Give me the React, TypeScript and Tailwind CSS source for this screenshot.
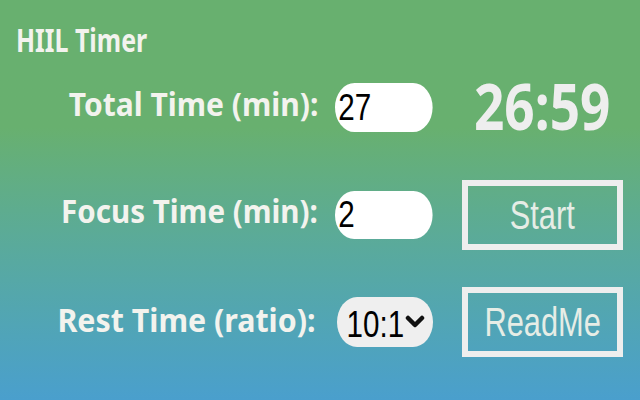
import { useState } from 'react';

const narrow = "font-['Liberation_Sans',Arial,sans-serif]";

function Label({ children, squeeze, end }: { children: string; squeeze: string; end?: string }) {
    return (
        <div className={`w-[318px] text-right -mt-[6px] ${end ?? ''}`}>
            <span className={`inline-block origin-right ${squeeze} text-[33px] font-bold leading-none whitespace-nowrap`}>{children}</span>
        </div>
    );
}

function OutlineButton({ children }: { children: string }) {
    return (
        <button className="ml-[29px] w-[161px] h-[70px] border-[6px] border-[#eeeeee] flex items-center justify-center overflow-hidden">
            <span className={`inline-block scale-x-[0.77] text-[40px] leading-none text-[#e6ede6] ${narrow}`}>{children}</span>
        </button>
    );
}

export default function App() {
    const [total, setTotal] = useState('27');
    const [focus, setFocus] = useState('2');
    const [ratio, setRatio] = useState('10:1');

    return (
        <div className="w-[640px] h-[400px] overflow-hidden bg-linear-to-b from-[#68b06f] from-[32%] to-[#4a9fcd] text-[#f3f3ee] font-['Noto_Sans',sans-serif]">
            {/* Title */}
            <div className="h-[54px] pl-[16px] pt-[24px]">
                <span className="inline-block origin-left scale-x-[0.78] text-[32px] font-bold leading-[32px] whitespace-nowrap">HIIL Timer</span>
            </div>

            {/* Total time */}
            <div className="flex items-center h-[107px]">
                <Label squeeze="scale-x-[0.91]">Total Time (min):</Label>
                <div className="ml-[17px] w-[98px] h-[49px]">
                    <input
                        value={total}
                        onChange={(e) => setTotal(e.target.value)}
                        className={`origin-left scale-x-[0.8] w-[122px] h-[49px] rounded-full bg-white px-[4px] text-[37px] text-black outline-none ${narrow}`}
                    />
                </div>
                <div className="ml-[29px] w-[161px] flex justify-center -mt-[4px]">
                    <span className="inline-block scale-x-[0.83] text-[64px] font-bold leading-none text-[#eeeeee]">26:59</span>
                </div>
            </div>

            {/* Focus time */}
            <div className="flex items-center h-[107px]">
                <Label squeeze="scale-x-[0.895]">Focus Time (min):</Label>
                <div className="ml-[17px] w-[98px] h-[48px]">
                    <input
                        value={focus}
                        onChange={(e) => setFocus(e.target.value)}
                        className={`origin-left scale-x-[0.8] w-[122px] h-[48px] rounded-full bg-white px-[4px] text-[37px] text-black outline-none ${narrow}`}
                    />
                </div>
                <OutlineButton>Start</OutlineButton>
            </div>

            {/* Rest time */}
            <div className="flex items-center h-[107px]">
                <Label squeeze="scale-x-[0.92]" end="pr-[3px] mt-[-2px]">Rest Time (ratio):</Label>
                <div className="relative ml-[19px] w-[96px] h-[50px]">
                    <select
                        value={ratio}
                        onChange={(e) => setRatio(e.target.value)}
                        className={`appearance-none origin-left scale-x-[0.8] w-[120px] h-[50px] rounded-full bg-[#efefef] pl-[12px] pr-[36px] text-[37px] text-black outline-none ${narrow}`}
                    >
                        <option value="10:1">10:1</option>
                        <option value="5:1">5:1</option>
                        <option value="3:1">3:1</option>
                    </select>
                    <svg className="absolute right-[8px] top-[17px] w-[20px] h-[16px] pointer-events-none" viewBox="0 0 20 16" fill="none">
                        <path d="M3 4l7 7 7-7" stroke="#111" strokeWidth="4.5" strokeLinecap="round" strokeLinejoin="round" />
                    </svg>
                </div>
                <OutlineButton>ReadMe</OutlineButton>
            </div>
        </div>
    );
}
